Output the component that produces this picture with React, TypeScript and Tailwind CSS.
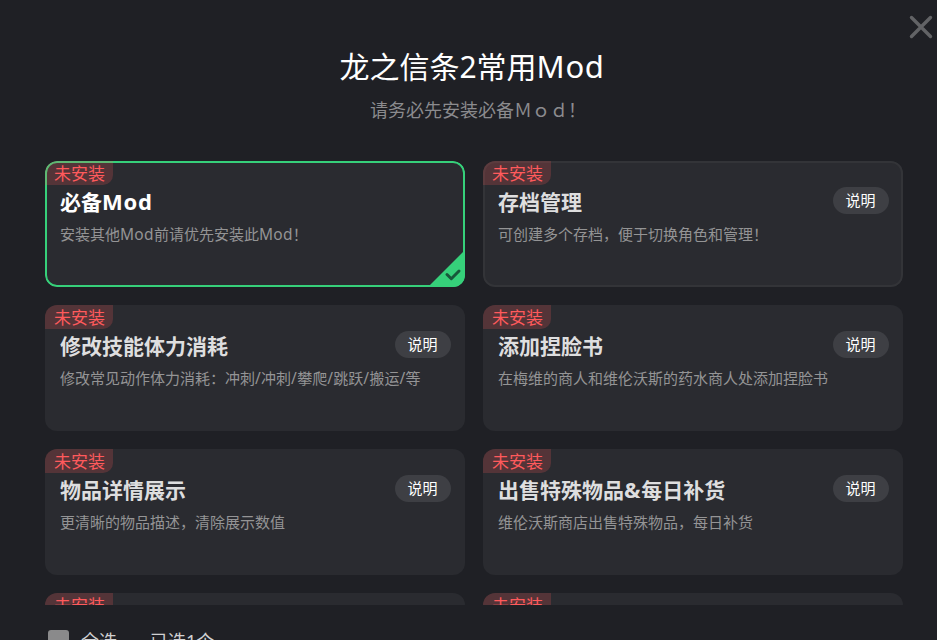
import React from 'react';

type Mod = {
  title: string;
  description: string;
  selected?: boolean;
  outlined?: boolean;
  help?: boolean;
};

const mods: Mod[] = [
  { title: '必备Mod', description: '安装其他Mod前请优先安装此Mod！', selected: true },
  { title: '存档管理', description: '可创建多个存档，便于切换角色和管理！', outlined: true, help: true },
  { title: '修改技能体力消耗', description: '修改常见动作体力消耗：冲刺/冲刺/攀爬/跳跃/搬运/等', help: true },
  { title: '添加捏脸书', description: '在梅维的商人和维伦沃斯的药水商人处添加捏脸书', help: true },
  { title: '物品详情展示', description: '更清晰的物品描述，清除展示数值', help: true },
  { title: '出售特殊物品&每日补货', description: '维伦沃斯商店出售特殊物品，每日补货', help: true },
  { title: '', description: '' },
  { title: '', description: '' },
];

// Latin runs are set slightly wider than the Chinese text around them
const Mixed = ({ text, latin }: { text: string; latin: string }) => (
  <>
    {text.split(/([A-Za-z&/]+)/).map((part, i) =>
      i % 2 ? <span key={i} className={latin}>{part}</span> : part
    )}
  </>
);

const ModCard = ({ mod }: { mod: Mod }) => {
  const border = mod.selected
    ? 'border-[#36d07a]'
    : mod.outlined
      ? 'border-[#333438]'
      : 'border-transparent';

  return (
    <div className="relative h-[126px] overflow-hidden rounded-xl bg-[#2a2b30]">
      <div className={`pointer-events-none absolute inset-0 rounded-xl border-2 ${border}`} />
      <div className="relative h-6 w-[68px] rounded-br-[10px] bg-[#ff5a5c]/20 pt-px pl-[9px] text-[17px] leading-6 text-[#ff5a5c]">
        <span className="whitespace-nowrap">未安装</span>
      </div>
      <div className="flex items-start justify-between pr-[14px] pl-[15px]">
        <div className="whitespace-nowrap">
          <h2 className={`mt-[2px] text-[21px] leading-[30px] font-bold ${mod.selected ? 'text-white' : 'text-[#dededf]'}`}>
            <Mixed text={mod.title} latin="text-[22px] leading-none tracking-[0.7px]" />
          </h2>
          <p className="mt-[6px] text-[15px] leading-[22px] text-[#949495]">
            <Mixed text={mod.description} latin="text-[15.5px] leading-none tracking-[0.3px]" />
          </p>
        </div>
        {mod.help && (
          <button className="mt-[2px] -ml-14 h-[27px] w-14 shrink-0 rounded-full bg-[#3e3f44] pr-px text-[15px] leading-[27px] text-white">
            说明
          </button>
        )}
      </div>
      {mod.selected && (
        <svg className="absolute right-0 bottom-0" width="37" height="37" viewBox="0 0 37 37" fill="none">
          <path d="M37 0V37H0Z" fill="#36d07a" />
          <path d="M19 24.5L23.3 28.7L31 21" stroke="#17573a" strokeWidth="3" strokeLinecap="round" strokeLinejoin="round" />
        </svg>
      )}
    </div>
  );
};

const App = () => {
  return (
    <div className="relative flex h-[640px] w-[937px] flex-col overflow-hidden bg-[#1f2025] font-['Noto_Sans','Noto_Sans_CJK_SC',sans-serif]">
      <header className="flex h-[161px] shrink-0 flex-col items-center pt-[45px] pl-[7px]">
        <h1 className="text-[30px] leading-[44px] text-white">
          <Mixed text="龙之信条2常用Mod" latin="text-[31px] leading-none tracking-[0.7px]" />
        </h1>
        <p className="mt-[8px] pl-3 text-[18px] leading-[26px] text-[#8b8b8e]">请务必先安装必备Ｍｏｄ！</p>
      </header>

      <button className="absolute top-[15px] right-[4px]" aria-label="关闭">
        <svg width="24" height="24" viewBox="0 0 24 24" fill="none">
          <path d="M2.5 2.5L21.5 21.5M21.5 2.5L2.5 21.5" stroke="#626366" strokeWidth="3.4" strokeLinecap="round" />
        </svg>
      </button>

      <main className="grid h-[444px] shrink-0 grid-cols-[420px_420px] content-start gap-[18px] overflow-hidden pl-[45px]">
        {mods.map((mod, index) => (
          <ModCard key={index} mod={mod} />
        ))}
      </main>

      <footer className="flex items-start pt-[25px] pl-12 text-[18px] leading-[26px] text-[#d0d0d2]">
        <div className="h-[21px] w-[21px] shrink-0 rounded-[3px] bg-[#8a8a8b]" />
        <span className="-mt-[2px] ml-3">全选</span>
        <span className="-mt-[2px] ml-[33px]">已选1个</span>
      </footer>
    </div>
  );
};

export default App;
